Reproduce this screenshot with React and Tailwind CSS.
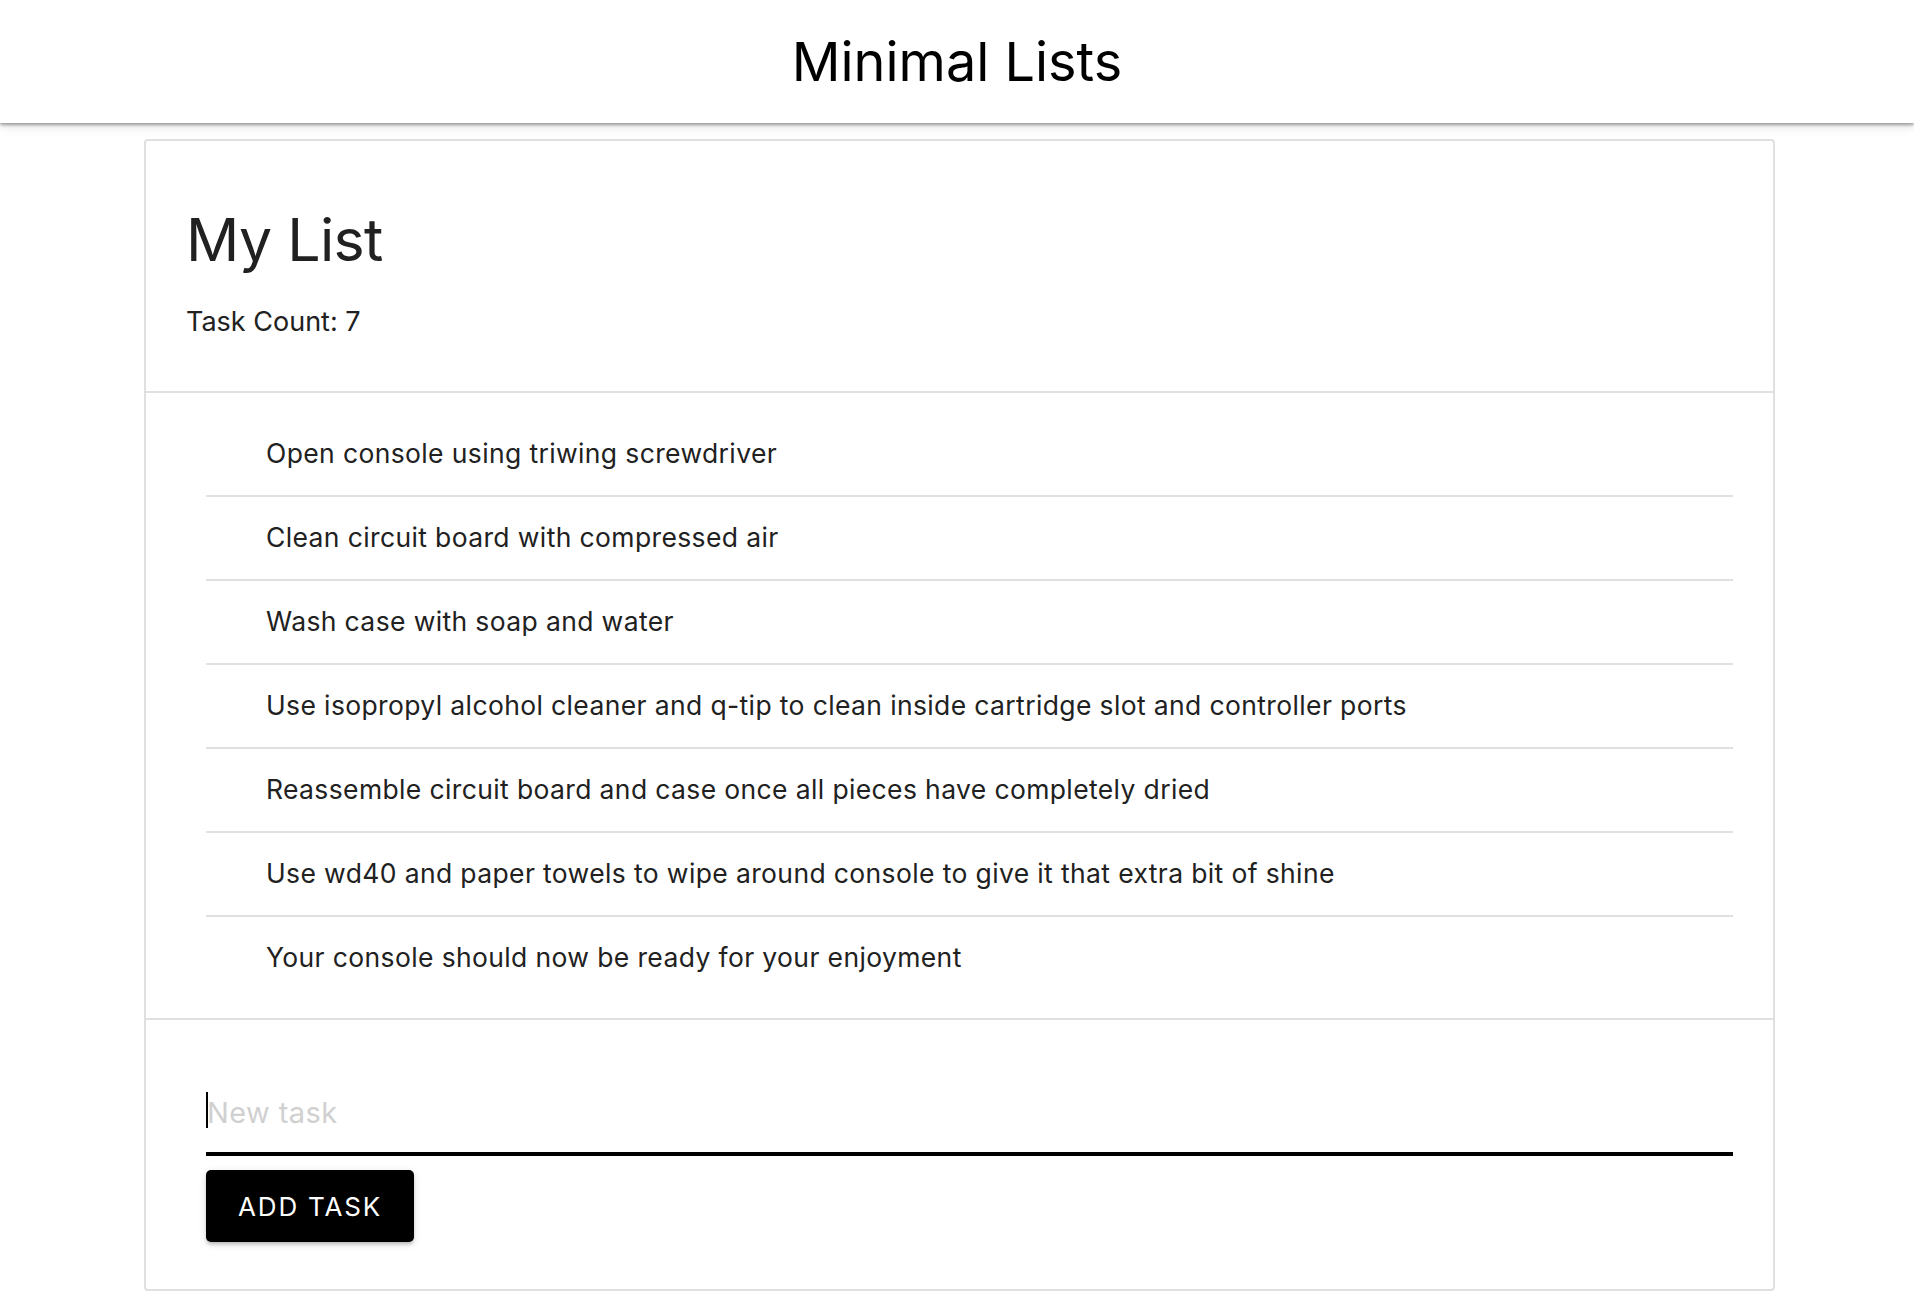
import React from "react";

const tasks = [
  "Open console using triwing screwdriver",
  "Clean circuit board with compressed air",
  "Wash case with soap and water",
  "Use isopropyl alcohol cleaner and q-tip to clean inside cartridge slot and controller ports",
  "Reassemble circuit board and case once all pieces have completely dried",
  "Use wd40 and paper towels to wipe around console to give it that extra bit of shine",
  "Your console should now be ready for your enjoyment",
];

export default function App() {
  return (
    <div className="min-h-[1316px] bg-white font-['Inter',sans-serif] text-[#212121]">
      <header className="relative z-10 flex h-[123px] items-center justify-center bg-white shadow-[0_2px_3px_rgba(0,0,0,0.35),0_4px_10px_rgba(0,0,0,0.1)]">
        <h1 className="text-[54px] leading-[54px] font-normal text-black">Minimal Lists</h1>
      </header>

      <main className="pt-[16px]">
        <div className="ml-[144px] w-[1631px] rounded-[4px] border-2 border-[#e0e0e0] bg-white">
          <section className="h-[250px] pl-[40px] pt-[69px]">
            <h2 className="text-[59px] leading-[59px] font-normal tracking-[-0.7px]">My List</h2>
            <p className="mt-[39px] text-[27px] leading-[27px]">Task Count: {tasks.length}</p>
          </section>

          <section className="border-t-2 border-[#e0e0e0] pt-[20px] pb-[19px]">
            <ul className="ml-[60px] mr-[40px]">
              {tasks.map((t, i) => (
                <li
                  key={i}
                  className={
                    i < tasks.length - 1
                      ? "flex h-[84px] items-center border-b-2 border-[#e0e0e0] pl-[60px] text-[26.5px] tracking-[0.37px]"
                      : "flex h-[82px] items-center pl-[60px] text-[26.5px] tracking-[0.37px]"
                  }
                >
                  {t}
                </li>
              ))}
            </ul>
          </section>

          <section className="border-t-2 border-[#e0e0e0] pt-[60px] pb-[47px] pl-[60px] pr-[40px]">
            <div className="relative">
              <input
                type="text"
                placeholder="New task"
                className="block h-[76px] w-full border-b-4 border-black bg-transparent pb-[8px] pl-[1px] text-[29px] leading-[34px] tracking-[0.4px] text-[#212121] outline-none placeholder:text-[#d0d0d0]"
              />
              <span className="absolute left-0 top-[12px] h-[36px] w-[2px] bg-black" />
            </div>
            <button
              type="button"
              className="mt-[14px] flex h-[72px] w-[208px] items-center justify-center rounded-[5px] bg-black text-[26px] font-normal tracking-[1.8px] text-white shadow-[0_3px_2px_-3px_rgba(0,0,0,0.2),0_3px_3px_0_rgba(0,0,0,0.14),0_2px_8px_0_rgba(0,0,0,0.12)]"
            >
              ADD TASK
            </button>
          </section>
        </div>
      </main>
    </div>
  );
}
